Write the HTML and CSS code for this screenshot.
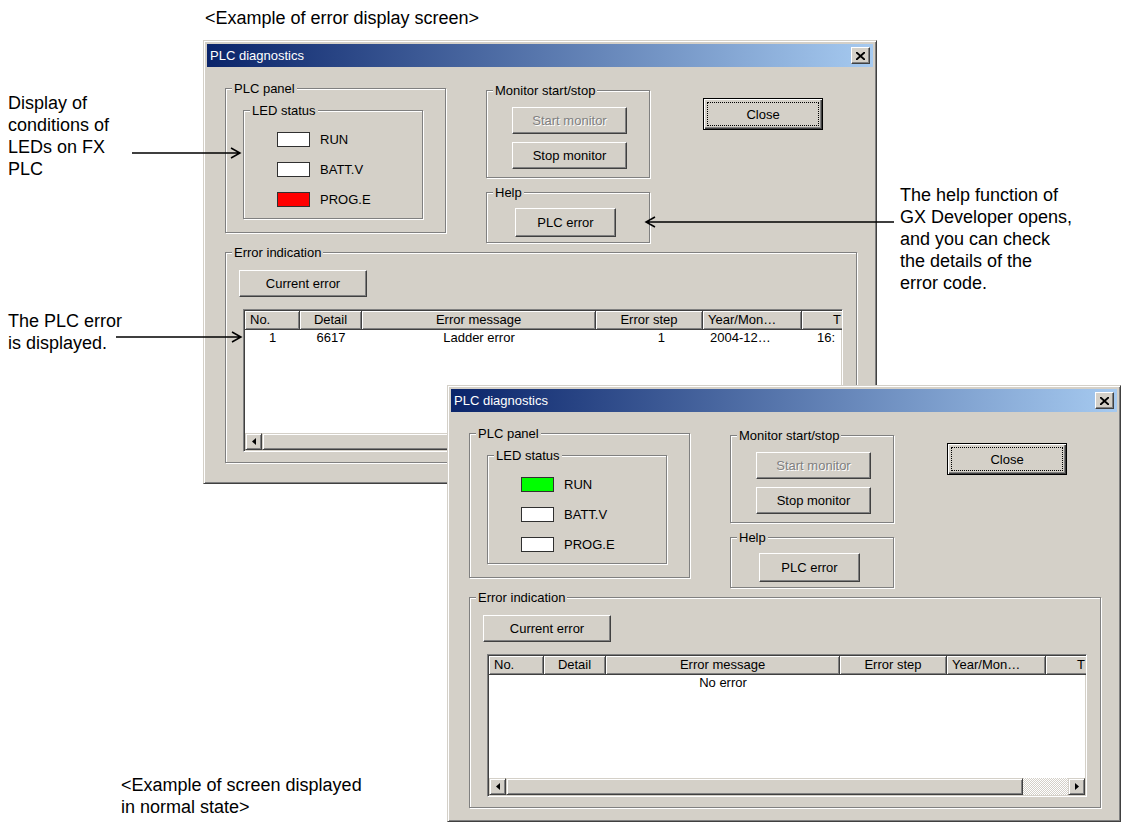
FILE: index.html
```html
<!DOCTYPE html>
<html lang="en">
<head>
  <meta charset="UTF-8" />
  <title>PLC diagnostics</title>
  <link rel="stylesheet" href="styles.css">
</head>
<body>
  <div class="sheet">
    <p class="caption cap-top">&lt;Example of error display screen&gt;</p>
    <p class="note note-leds">Display of<br>conditions of<br>LEDs on FX<br>PLC</p>
    <p class="note note-error">The PLC error<br>is displayed.</p>
    <p class="note note-help">The help function of<br>GX Developer opens,<br>and you can check<br>the details of the<br>error code.</p>
    <p class="caption cap-bottom">&lt;Example of screen displayed<br>in normal state&gt;</p>

    <!-- dialog showing an error -->
    <div class="window win-error">
      <div class="titlebar">
        <span>PLC diagnostics</span>
        <span class="btn-x"><svg width="9" height="8" viewBox="0 0 9 8"><path d="M0 0L9 8M9 0L0 8" stroke="#000" stroke-width="1.9"/></svg></span>
      </div>
      <div class="dlg">
        <div class="top-row">
          <div class="grp grp-plc">
            <span class="grp-title">PLC panel</span>
            <div class="grp grp-led">
              <span class="grp-title">LED status</span>
              <div class="led-row"><span class="led"></span>RUN</div>
              <div class="led-row"><span class="led"></span>BATT.V</div>
              <div class="led-row"><span class="led led-red"></span>PROG.E</div>
            </div>
          </div>
          <div class="col-mid">
            <div class="grp grp-mon">
              <span class="grp-title">Monitor start/stop</span>
              <button class="btn btn-mon" disabled>Start monitor</button>
              <button class="btn btn-mon">Stop monitor</button>
            </div>
            <div class="grp grp-help">
              <span class="grp-title">Help</span>
              <button class="btn btn-help">PLC error</button>
            </div>
          </div>
          <button class="btn btn-close"><span>Close</span></button>
        </div>
        <div class="grp grp-err">
          <span class="grp-title">Error indication</span>
          <button class="btn btn-cur">Current error</button>
          <div class="list">
            <div class="list-cols list-head">
              <span class="hd left">No.</span>
              <span class="hd">Detail</span>
              <span class="hd">Error message</span>
              <span class="hd">Error step</span>
              <span class="hd left">Year/Mon…</span>
              <span class="hd hd-time">T</span>
            </div>
            <div class="list-body">
              <div class="list-cols list-row">
                <span class="cell">1</span>
                <span class="cell">6617</span>
                <span class="cell">Ladder error</span>
                <span class="cell step">1</span>
                <span class="cell left">2004-12…</span>
                <span class="cell left time">16:</span>
              </div>
            </div>
            <div class="hscroll">
              <span class="hs-btn"><svg width="4" height="7" viewBox="0 0 4 7"><path d="M4 0V7L0 3.5Z"/></svg></span>
              <span class="hs-thumb"></span>
              <span class="hs-track"></span>
              <span class="hs-btn"><svg width="4" height="7" viewBox="0 0 4 7"><path d="M0 0V7L4 3.5Z"/></svg></span>
            </div>
          </div>
        </div>
      </div>
    </div>

    <!-- dialog in normal state -->
    <div class="window win-normal">
      <div class="titlebar">
        <span>PLC diagnostics</span>
        <span class="btn-x"><svg width="9" height="8" viewBox="0 0 9 8"><path d="M0 0L9 8M9 0L0 8" stroke="#000" stroke-width="1.9"/></svg></span>
      </div>
      <div class="dlg">
        <div class="top-row">
          <div class="grp grp-plc">
            <span class="grp-title">PLC panel</span>
            <div class="grp grp-led">
              <span class="grp-title">LED status</span>
              <div class="led-row"><span class="led led-green"></span>RUN</div>
              <div class="led-row"><span class="led"></span>BATT.V</div>
              <div class="led-row"><span class="led"></span>PROG.E</div>
            </div>
          </div>
          <div class="col-mid">
            <div class="grp grp-mon">
              <span class="grp-title">Monitor start/stop</span>
              <button class="btn btn-mon" disabled>Start monitor</button>
              <button class="btn btn-mon">Stop monitor</button>
            </div>
            <div class="grp grp-help">
              <span class="grp-title">Help</span>
              <button class="btn btn-help">PLC error</button>
            </div>
          </div>
          <button class="btn btn-close"><span>Close</span></button>
        </div>
        <div class="grp grp-err">
          <span class="grp-title">Error indication</span>
          <button class="btn btn-cur">Current error</button>
          <div class="list">
            <div class="list-cols list-head">
              <span class="hd left">No.</span>
              <span class="hd">Detail</span>
              <span class="hd">Error message</span>
              <span class="hd">Error step</span>
              <span class="hd left">Year/Mon…</span>
              <span class="hd hd-time">T</span>
            </div>
            <div class="list-body">
              <div class="list-cols list-row">
                <span class="cell"></span>
                <span class="cell"></span>
                <span class="cell">No error</span>
              </div>
            </div>
            <div class="hscroll">
              <span class="hs-btn"><svg width="4" height="7" viewBox="0 0 4 7"><path d="M4 0V7L0 3.5Z"/></svg></span>
              <span class="hs-thumb"></span>
              <span class="hs-track"></span>
              <span class="hs-btn"><svg width="4" height="7" viewBox="0 0 4 7"><path d="M0 0V7L4 3.5Z"/></svg></span>
            </div>
          </div>
        </div>
      </div>
    </div>

    <svg class="arrows" width="1123" height="825" viewBox="0 0 1123 825">
      <g fill="none" stroke="#000" stroke-width="1.5">
        <path d="M132 153H240M231 148L240 153L231 158"/>
        <path d="M116 337H241M232 332L241 337L232 342"/>
        <path d="M894 222H646M655 217L646 222L655 227"/>
      </g>
    </svg>
  </div>
</body>
</html>
```

FILE: styles.css
```css
* { box-sizing: border-box; }
body { margin: 0; background: #fff; font-family: "Liberation Sans", Arial, sans-serif; color: #000; }
.sheet { position: relative; width: 1123px; height: 825px; overflow: hidden; }

/* document text around the screenshots */
.caption, .note { position: absolute; margin: 0; font-size: 18px; line-height: 22px; }
.cap-top { left: 205px; top: 7px; }
.cap-bottom { left: 121px; top: 774px; }
.note-leds { left: 8px; top: 92px; }
.note-error { left: 8px; top: 310px; }
.note-help { left: 900px; top: 184px; }
.arrows { position: absolute; left: 0; top: 0; pointer-events: none; }

/* window frame */
.window {
  position: absolute;
  display: flex; flex-direction: column;
  background: #d4d0c8;
  border: 1px solid; border-color: #d4d0c8 #404040 #404040 #d4d0c8;
  box-shadow: inset 1px 1px #fff, inset -1px -1px #808080;
  padding: 3px;
  font-size: 13px;
}
.win-error { left: 203px; top: 40px; width: 674px; height: 444px; }
.win-normal { left: 447px; top: 385px; width: 674px; height: 437px; }
.win-normal .dlg { padding-bottom: 10px; }
.titlebar {
  height: 23px; flex: none;
  display: flex; align-items: center; justify-content: space-between;
  padding: 0 3px 0 3px;
  background: linear-gradient(to right, #0a246a, #a6caf0);
  color: #fff;
}
.btn-x {
  width: 19px; height: 17px;
  display: flex; align-items: center; justify-content: center;
  background: #d4d0c8;
  border: 1px solid; border-color: #fff #404040 #404040 #fff;
  box-shadow: inset -1px -1px #808080;
}

.dlg { flex: 1; display: flex; flex-direction: column; padding: 21px 16px 17px 18px; min-height: 0; }
.top-row { display: flex; align-items: flex-start; height: 155px; flex: none; }

/* group boxes */
.grp {
  position: relative;
  border: 1px solid #808080;
  box-shadow: inset 1px 1px #fff, 1px 1px #fff;
}
.grp-title {
  position: absolute; left: 6px; top: -8px;
  padding: 0 2px; line-height: 15px;
  background: #d4d0c8; white-space: nowrap;
}
.grp-plc { width: 221px; height: 145px; padding: 21px 0 0 17px; }
.grp-led { width: 180px; height: 109px; padding: 21px 0 0 33px; display: flex; flex-direction: column; gap: 15px; }
.led-row { display: flex; align-items: center; gap: 10px; height: 15px; }
.led { width: 33px; height: 15px; background: #fff; border: 1px solid #303030; }
.led-red { background: #ff0000; }
.led-green { background: #00ff00; }

.col-mid { margin-left: 40px; margin-top: 2px; display: flex; flex-direction: column; gap: 14px; }
.grp-mon { width: 164px; height: 88px; padding: 16px 0 0 25px; display: flex; flex-direction: column; align-items: flex-start; gap: 8px; }
.grp-help { width: 164px; height: 51px; padding: 15px 0 0 28px; }

/* push buttons */
.btn {
  font: inherit; color: #000;
  background: #d4d0c8;
  border: 1px solid; border-color: #fff #404040 #404040 #fff;
  box-shadow: inset -1px -1px #808080;
  padding: 0; margin: 0;
}
.btn:disabled { color: #808080; text-shadow: 1px 1px #fff; }
.btn-mon { width: 115px; height: 27px; }
.btn-help { width: 101px; height: 29px; }
.btn-close {
  width: 120px; height: 32px; margin: 10px 0 0 53px;
  border: 1px solid #000;
  box-shadow: inset 1px 1px #fff, inset -1px -1px #404040, inset -2px -2px #808080;
  outline: 1px dotted #000; outline-offset: -5px;
}
.btn-cur { width: 128px; height: 27px; margin-left: -1px; }

.grp-err { flex: 1; margin-top: 9px; padding: 17px 13px 10px 14px; display: flex; flex-direction: column; align-items: flex-start; min-height: 0; }

/* list view */
.list {
  flex: 1; align-self: stretch; margin: 12px 0 0 3px; min-height: 0;
  display: flex; flex-direction: column;
  background: #fff; overflow: hidden;
  border: 1px solid; border-color: #808080 #fff #fff #808080;
  box-shadow: inset 1px 1px #404040, inset -1px -1px #d4d0c8;
  padding: 1px;
}
.list-cols { display: grid; grid-template-columns: 55px 62px 234px 107px 99px 60px; width: max-content; }
.hd {
  height: 19px; line-height: 18px; text-align: center; white-space: nowrap; overflow: hidden;
  background: #d4d0c8;
  border-right: 1px solid #404040; border-bottom: 1px solid #404040;
  box-shadow: inset 1px 1px #fff, inset -1px -1px #808080;
}
.hd.left { text-align: left; padding-left: 5px; }
.hd.hd-time { text-align: left; padding-left: 31px; }
.list-body { flex: 1; }
.cell { height: 16px; line-height: 16px; text-align: center; white-space: nowrap; overflow: hidden; }
.cell.left { text-align: left; padding-left: 7px; }
.cell.step { text-align: right; padding-right: 38px; }
.cell.time { padding-left: 15px; }

.hscroll { height: 17px; flex: none; display: flex; }
.hs-btn {
  width: 17px; height: 17px; flex: none;
  display: flex; align-items: center; justify-content: center;
  background: #d4d0c8;
  border: 1px solid; border-color: #d4d0c8 #404040 #404040 #d4d0c8;
  box-shadow: inset 1px 1px #fff, inset -1px -1px #808080;
}
.hs-thumb {
  flex: 1;
  background: #d4d0c8;
  border: 1px solid; border-color: #d4d0c8 #404040 #404040 #d4d0c8;
  box-shadow: inset 1px 1px #fff, inset -1px -1px #808080;
}
.hs-track { width: 45px; flex: none; background: repeating-conic-gradient(#fff 0 25%, #d4d0c8 0 50%) 0 0 / 2px 2px; }
```
